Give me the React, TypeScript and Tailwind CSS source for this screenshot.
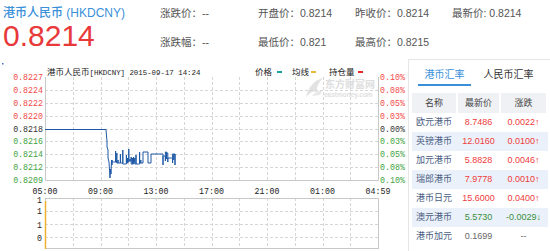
import React from "react";

const FONT = { fontFamily: '"Liberation Sans", "Noto Sans CJK SC", sans-serif' };
const MONO = '"Liberation Mono", "Noto Sans CJK SC", monospace';
const CJK = '"Noto Sans CJK SC", sans-serif';

// chart geometry (page coords)
const X0 = 45;
const X1 = 378;
const YT = 77;
const YB = 180;
const STEP = (YB - YT) / 8;

const leftLabels = ["0.8227", "0.8224", "0.8222", "0.8220", "0.8218", "0.8216", "0.8214", "0.8212", "0.8209"];
const rightLabels = ["0.10%", "0.08%", "0.05%", "0.03%", "0.00%", "0.03%", "0.05%", "0.08%", "0.10%"];
const times = ["05:00", "09:00", "13:00", "17:00", "21:00", "01:00", "04:59"];

const rows = [
  { name: "欧元港币", price: "8.7486", chg: "0.0022", dir: "up" },
  { name: "英镑港币", price: "12.0160", chg: "0.0100", dir: "up" },
  { name: "加元港币", price: "5.8828", chg: "0.0046", dir: "up" },
  { name: "瑞郎港币", price: "7.9778", chg: "0.0010", dir: "up" },
  { name: "港币日元", price: "15.6000", chg: "0.0400", dir: "up" },
  { name: "澳元港币", price: "5.5730", chg: "-0.0029", dir: "down" },
  { name: "港币加元", price: "0.1699", chg: "--", dir: "flat" },
];

let seed = 11;
function rnd() {
  seed = (seed * 9301 + 49297) % 233280;
  return seed / 233280;
}

function buildPrice() {
  let d = "M45,129.5 H106 L106.5,136 L107,141 L107,147 L108,150 L108,158 L109,162 L110,178 L110.5,169 L111,174 L111.5,160 L112,165";
  for (let x = 112; x <= 142; x += 1.2) {
    if (rnd() < 0.35) {
      d += ` H${x.toFixed(1)}`;
      continue;
    }
    const top = 149 + Math.round(rnd() * 12);
    const base = 161 + Math.round(rnd() * 4);
    d += ` H${x.toFixed(1)} V${top} V${base}`;
  }
  d += " H143 V152 H148 V163 H151 V154 H163";
  for (let x = 163; x <= 175; x += 1.2) {
    if (rnd() < 0.35) {
      d += ` H${x.toFixed(1)}`;
      continue;
    }
    const top = 150 + Math.round(rnd() * 9);
    const base = 159 + Math.round(rnd() * 6);
    d += ` H${x.toFixed(1)} V${base} V${top}`;
  }
  return d;
}
const pricePath = buildPrice();

function Chart() {
  const vx = Array.from({ length: 11 }, (_, j) => Math.round(X0 + (j + 1) * ((X1 - X0) / 12)) + 0.5);
  const hy = Array.from({ length: 7 }, (_, i) => Math.round(YT + (i + 1) * STEP) + 0.5);
  const labelColor = (i: number) => (i < 4 ? "#f24a4a" : i === 4 ? "#333333" : "#3fa33f");
  return (
    <svg width={408} height={194} viewBox="0 57 408 194">
      <rect x={2} y={63} width={1.5} height={1.5} fill="#3b6fd0" />
      {/* title */}
      <text x={47} y={75} fill="#222" fontSize={8.5} fontFamily={CJK}>
        港币人民币
        <tspan fontFamily={MONO} fontSize={7.4}>[HKDCNY] 2015-09-17 14:24</tspan>
      </text>
      {/* legend */}
      <text x={255} y={75} fontSize={8.5} fill="#222" fontFamily={CJK}>价格</text>
      <rect x={277} y={71} width={5} height={2} fill="#1aa3a0" />
      <text x={292} y={75} fontSize={8.5} fill="#222" fontFamily={CJK}>均线</text>
      <rect x={311} y={71} width={5} height={2} fill="#e8b83a" />
      <text x={329} y={75} fontSize={8.5} fill="#222" fontFamily={CJK}>持仓量</text>
      <rect x={358} y={71} width={5} height={2} fill="#e82828" />

      {/* watermark */}
      <g>
        <path d="M306,97 C308,88 314,80 323,78 C318,83 316,88 317,93 C314,90 311,92 306,97 Z" fill="#e2e2e2" />
        <path d="M312,96 C315,92 319,90 322,91 L320,95 Z" fill="#e8e8e8" />
        <text x={325} y={88} fontSize={10} fill="#dedede" fontFamily={CJK} fontWeight={700}>东方财富网</text>
        <text x={324} y={97} fontSize={6.5} fill="#e0e0e0" fontFamily='"Liberation Sans", sans-serif' fontWeight={700}>eastmoney.com</text>
      </g>

      {/* upper grid */}
      {hy.map((y) => (
        <line key={"h" + y} x1={X0} x2={X1} y1={y} y2={y} stroke="#d6d6d6" strokeDasharray="3 2" />
      ))}
      {vx.map((x) => (
        <line key={"v" + x} x1={x} x2={x} y1={YT} y2={YB} stroke="#d6d6d6" strokeDasharray="3 2" />
      ))}
      <path d={`M${X0 + 0.5},${YT} V${YB + 0.5} H${X1 + 0.5} V${YT}`} fill="none" stroke="#c8c8c8" />

      {leftLabels.map((t, i) => (
        <text key={"l" + i} x={43} y={YT + i * STEP + 3} textAnchor="end" fontSize={8.3} fontFamily={MONO} fill={labelColor(i)}>
          {t}
        </text>
      ))}
      {rightLabels.map((t, i) => (
        <text key={"r" + i} x={380} y={YT + i * STEP + 3} fontSize={8.3} fontFamily={MONO} fill={labelColor(i)}>
          {t}
        </text>
      ))}

      <path d={pricePath} fill="none" stroke="#1d58a6" strokeWidth={1} />

      {times.map((t, k) => (
        <text key={t} x={X0 + k * 55.5} y={194} textAnchor="middle" fontSize={8.3} fontFamily={MONO} fill="#222">
          {t}
        </text>
      ))}

      {/* lower chart */}
      {[211.5, 224.5, 237.5].map((y) => (
        <line key={"lh" + y} x1={X0} x2={X1} y1={y} y2={y} stroke="#d6d6d6" strokeDasharray="3 2" />
      ))}
      {vx.map((x) => (
        <line key={"lv" + x} x1={x} x2={x} y1={198} y2={249} stroke="#d6d6d6" strokeDasharray="3 2" />
      ))}
      <rect x={X0 + 0.5} y={198.5} width={X1 - X0} height={50} fill="none" stroke="#c8c8c8" />
      <line x1={X0 + 0.5} x2={X0 + 0.5} y1={201} y2={249} stroke="#efb030" strokeWidth={1.5} />
      {[
        ["1", 203],
        ["1", 214],
        ["1", 228],
        ["0", 241],
      ].map(([t, y], i) => (
        <text key={"lb" + i} x={42} y={y as number} textAnchor="end" fontSize={8.3} fontFamily={MONO} fill="#222">
          {t}
        </text>
      ))}
    </svg>
  );
}

function Quote({ label, value }: { label: string; value: string }) {
  return (
    <div className="text-[10.5px] leading-[16px] text-[#555] whitespace-nowrap">
      {label}
      {value}
    </div>
  );
}

function RatePanel() {
  return (
    <div className="mt-[2px] w-[142px] border-l border-t border-[#e6e6e6] pl-[3px]">
      <div className="flex mb-[7px] text-[10px]">
        <div className="ml-[6px] w-[53px] h-[26px] pt-[8px] leading-[14px] text-center text-[#3a8fd9] border-b-2 border-[#3a8fd9]">
          港币汇率
        </div>
        <div className="ml-[12px] w-[51px] pt-[8px] leading-[14px] text-center text-[#333]">人民币汇率</div>
      </div>
      <div className="grid grid-cols-[44px_41px_45px] gap-x-[2px] text-[9px] text-[#444]">
        <div className="h-[20px] leading-[20px] bg-[#eff1f4] text-center">名称</div>
        <div className="h-[20px] leading-[20px] bg-[#eff1f4] text-center">最新价</div>
        <div className="h-[20px] leading-[20px] bg-[#eff1f4] text-center">涨跌</div>
      </div>
      {rows.map((r, i) => (
        <div
          key={r.name}
          className={
            i % 2 === 1
              ? "grid grid-cols-[44px_41px_45px] gap-x-[2px] w-[136px] h-[19px] leading-[19px] text-[9px] bg-[#eaf1fa]"
              : "grid grid-cols-[44px_41px_45px] gap-x-[2px] w-[136px] h-[19px] leading-[19px] text-[9px]"
          }
        >
          <div className="text-center text-[#4a5d82]">{r.name}</div>
          <div
            className={
              r.dir === "up"
                ? "text-center text-[#f03b3b]"
                : r.dir === "down"
                  ? "text-center text-[#3a8f3a]"
                  : "text-center text-[#666]"
            }
          >
            {r.price}
          </div>
          <div
            className={
              r.dir === "up"
                ? "text-center text-[#f03b3b]"
                : r.dir === "down"
                  ? "text-center text-[#3a8f3a]"
                  : "text-center text-[#666]"
            }
          >
            {r.chg}
            {r.dir === "up" ? "↑" : r.dir === "down" ? "↓" : ""}
          </div>
        </div>
      ))}
    </div>
  );
}

export default function App() {
  return (
    <div className="w-[550px] h-[251px] bg-white overflow-hidden" style={FONT}>
      <header className="flex h-[57px]">
        <div className="w-[160px] pl-[3px]">
          <div className="mt-[5px] text-[12px] leading-[16px] font-medium text-[#3a8fd9] whitespace-nowrap">港币人民币 (HKDCNY)</div>
          <div className="text-[30px] leading-[30px] text-[#e8383a]">0.8214</div>
        </div>
        <div className="grid grid-cols-[98px_97px_97px_98px] grid-rows-[16px_16px] gap-y-[13px] pt-[5px]">
          <Quote label="涨跌价：" value="--" />
          <Quote label="开盘价：" value="0.8214" />
          <Quote label="昨收价：" value="0.8214" />
          <Quote label="最新价: " value="0.8214" />
          <Quote label="涨跌幅：" value="--" />
          <Quote label="最低价：" value="0.821" />
          <Quote label="最高价：" value="0.8215" />
        </div>
      </header>
      <div className="flex">
        <div className="w-[408px] h-[194px]">
          <Chart />
        </div>
        <RatePanel />
      </div>
    </div>
  );
}
